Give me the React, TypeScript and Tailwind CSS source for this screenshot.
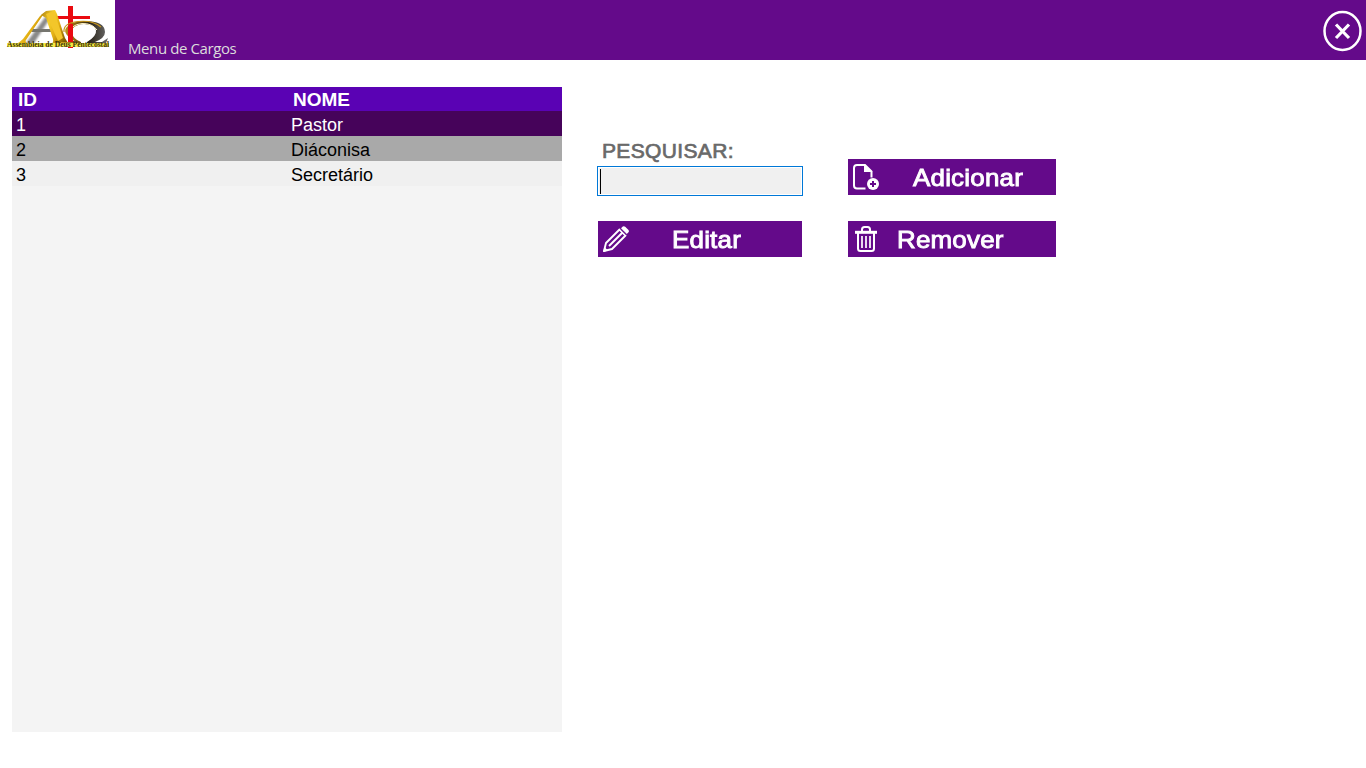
import React, { useState } from "react";

const rows = [
  { id: 1, nome: "Pastor", style: "bg-[#46035a] text-white" },
  { id: 2, nome: "Diáconisa", style: "bg-[#a9a9a9] text-black" },
  { id: 3, nome: "Secretário", style: "bg-[#f0f0f0] text-black" },
];

function Logo() {
  return (
    <svg width="115" height="60" viewBox="0 0 115 60" className="shrink-0 bg-white">
      <defs>
        <linearGradient id="gold" x1="0" y1="0" x2="1" y2="0.6">
          <stop offset="0" stopColor="#a87a0c" />
          <stop offset="0.35" stopColor="#f6d02c" />
          <stop offset="0.65" stopColor="#e0ac12" />
          <stop offset="1" stopColor="#7d5800" />
        </linearGradient>
        <linearGradient id="omega" x1="0" y1="0" x2="1" y2="0">
          <stop offset="0" stopColor="#d5a820" />
          <stop offset="0.3" stopColor="#8b6812" />
          <stop offset="0.6" stopColor="#2a2317" />
          <stop offset="1" stopColor="#6b6b6b" />
        </linearGradient>
        <filter id="soft" x="-20%" y="-20%" width="140%" height="140%">
          <feGaussianBlur stdDeviation="0.9" />
        </filter>
      </defs>
      <path d="M24 46L46 16L49 20L32 46Z" fill="#888" filter="url(#soft)" />
      <path d="M68 6h5v10h17v3H73v29h-5V19H51v-3h17z" fill="#ea0a10" />
      <path d="M33 29h20v3H31z" fill="#75756f" />
      <path d="M45 12L26 40Q24 42 30 45H15Q20 42 23 39L40 16Z" fill="url(#gold)" />
      <path d="M41 15L46 11L55 10L57 14L65 38Q67 42 70 45H50Q54 43 53 39L46 18Z" fill="url(#gold)" />
      <path d="M46 14L54 11L63 38L58 41Z" fill="#f3c62a" />
      <path
        fillRule="evenodd"
        d="M61 45V42H76Q62 34 66 28Q71 21 84 21Q105 21 105 32Q105 38 95 42H102L108 38L105 46H87V42Q97 36 96 30Q94 24 84 24Q71 25 72 33Q73 39 81 42V46Z"
        fill="url(#omega)"
      />
      <path d="M82 42Q73 38 73 32Q74 25 84 25Q94 25 95 31Q95 37 86 42Z" fill="white" />
      <path d="M64 32Q63 23 78 21.500Q93 20 101 27" fill="none" stroke="#c8961a" strokeWidth="1.200" />
      <path d="M71 34Q69 25 82 23.500Q92 23 97 30" fill="none" stroke="#fff4c8" strokeWidth="1" />
      <path d="M70 24h3v17h-5V26z" fill="#ea0a10" />
      <path d="M10 47.500H108" stroke="#555" strokeWidth="3" opacity="0.45" filter="url(#soft)" />
      <path d="M7 45H109" stroke="#f5e942" strokeWidth="4" />
      <text
        x="7"
        y="47"
        textLength="102"
        lengthAdjust="spacingAndGlyphs"
        fontSize="7.500"
        fontWeight="700"
        fontFamily="Liberation Serif, serif"
        fill="#3d340a"
      >
        Assembleia de Deus Pentecostal
      </text>
    </svg>
  );
}

function FilePlusIcon() {
  return (
    <svg width="36" height="36" viewBox="0 0 36 36" fill="none" className="shrink-0">
      <path d="M17.500 29.500H9Q6 29.500 6 26.500V9Q6 6 9 6H17L23.500 12.500V18.500" stroke="white" strokeWidth="2" />
      <path d="M16 5V13H24.500Z" fill="white" />
      <circle cx="25" cy="25" r="6" fill="white" />
      <path d="M25 22v6M22 25h6" stroke="#640a8a" strokeWidth="2" />
    </svg>
  );
}

function PencilIcon() {
  return (
    <svg width="36" height="36" viewBox="0 0 36 36" fill="none" className="shrink-0">
      <path d="M6 30L8 22L21.500 8.500L27.500 14.500L14 28Z" stroke="white" strokeWidth="1.900" strokeLinejoin="round" />
      <path d="M11 25L24.500 11.500" stroke="white" strokeWidth="1.900" />
      <path d="M23 7.300L24.800 5.600Q26 4.800 27.200 5.800L30.500 9Q31.500 10.200 30.500 11.200L28.800 13Z" fill="white" />
      <path d="M22.200 8L28 13.800" stroke="#640a8a" strokeWidth="0.800" />
      <path d="M5 31L6.500 26L10 29.600Z" fill="white" />
    </svg>
  );
}

function TrashIcon() {
  return (
    <svg width="36" height="36" viewBox="0 0 36 36" fill="none" className="shrink-0" stroke="white">
      <path d="M7 11.300H29" strokeWidth="3" />
      <path d="M14 10V8.500Q14 6 16.500 6H19.500Q22 6 22 8.500V10" strokeWidth="2" />
      <path d="M10 12V27.500Q10 30 12.500 30H23.500Q26 30 26 27.500V12" strokeWidth="2" />
      <path d="M14 15V27M18 15V27M22 15V27" strokeWidth="1.700" />
    </svg>
  );
}

function ActionButton({ icon, label, className }: { icon: React.ReactNode; label: string; className: string }) {
  return (
    <button className={`flex h-9 items-center bg-[#640a8a] text-2xl leading-9 text-white [-webkit-text-stroke:0.9px_white] ${className}`}>
      {icon}
      <span className="inline-block origin-left scale-x-[1.08] pt-0.5 tracking-[0.2px]">{label}</span>
    </button>
  );
}

export default function App() {
  const [query, setQuery] = useState("");
  return (
    <div className="h-screen w-full overflow-hidden bg-white font-['Liberation_Sans',Arial,sans-serif]">
      <header className="flex h-[60px] bg-[#640a8a]">
        <Logo />
        <h1 className="flex-1 self-end pb-px pl-[13px] font-['Open_Sans','Noto_Sans',sans-serif] text-[15px] leading-[22px] tracking-[-0.4px] text-[#dcdcdc]">
          Menu de Cargos
        </h1>
        <button aria-label="Fechar" className="mt-[10px] mr-[3px] size-[41px]">
          <svg width="41" height="42" viewBox="0 0 41 42" fill="none" stroke="white">
            <ellipse cx="20.500" cy="21" rx="18" ry="19" strokeWidth="2.500" />
            <path d="M14 14.500L27 28M27 14.500L14 28" strokeWidth="3.200" />
          </svg>
        </button>
      </header>

      <main className="flex pt-[27px] pl-3">
        <section className="h-[645px] w-[550px] bg-[#f4f4f4]">
          <div className="grid h-6 grid-cols-2 bg-[#5a02b4] text-[19px] leading-[26px] font-bold text-white">
            <span className="pl-1.5">ID</span>
            <span className="pl-1.5">NOME</span>
          </div>
          {rows.map((row) => (
            <div key={row.id} className={`grid h-[25px] grid-cols-2 text-lg leading-[28px] ${row.style}`}>
              <span className="pl-1">{row.id}</span>
              <span className="pl-1">{row.nome}</span>
            </div>
          ))}
        </section>

        <section className="ml-[35px] flex gap-[45px] pt-[50px]">
          <div className="w-[206px]">
            <label
              htmlFor="search"
              className="block h-[29px] pl-[5px] text-[21px] leading-[27px] tracking-[0.35px] text-[#696969] [-webkit-text-stroke:0.7px_#696969]"
            >
              PESQUISAR:
            </label>
            <div className="flex h-[30px] items-center border border-[#0078d7] bg-white p-px">
              <div className="flex h-full w-full items-center bg-[#f0f0f0]">
                <span className="ml-px h-[25px] w-px shrink-0 bg-black" />
                <input
                  id="search"
                  value={query}
                  onChange={(e) => setQuery(e.target.value)}
                  className="h-full w-full min-w-0 bg-transparent text-lg outline-none"
                />
              </div>
            </div>
            <ActionButton className="mt-[25px] ml-px w-[204px] gap-[38px]" icon={<PencilIcon />} label="Editar" />
          </div>
          <div className="flex w-[208px] flex-col gap-[26px] pt-[22px]">
            <ActionButton className="gap-[29px]" icon={<FilePlusIcon />} label="Adicionar" />
            <ActionButton className="gap-[13px]" icon={<TrashIcon />} label="Remover" />
          </div>
        </section>
      </main>
    </div>
  );
}
